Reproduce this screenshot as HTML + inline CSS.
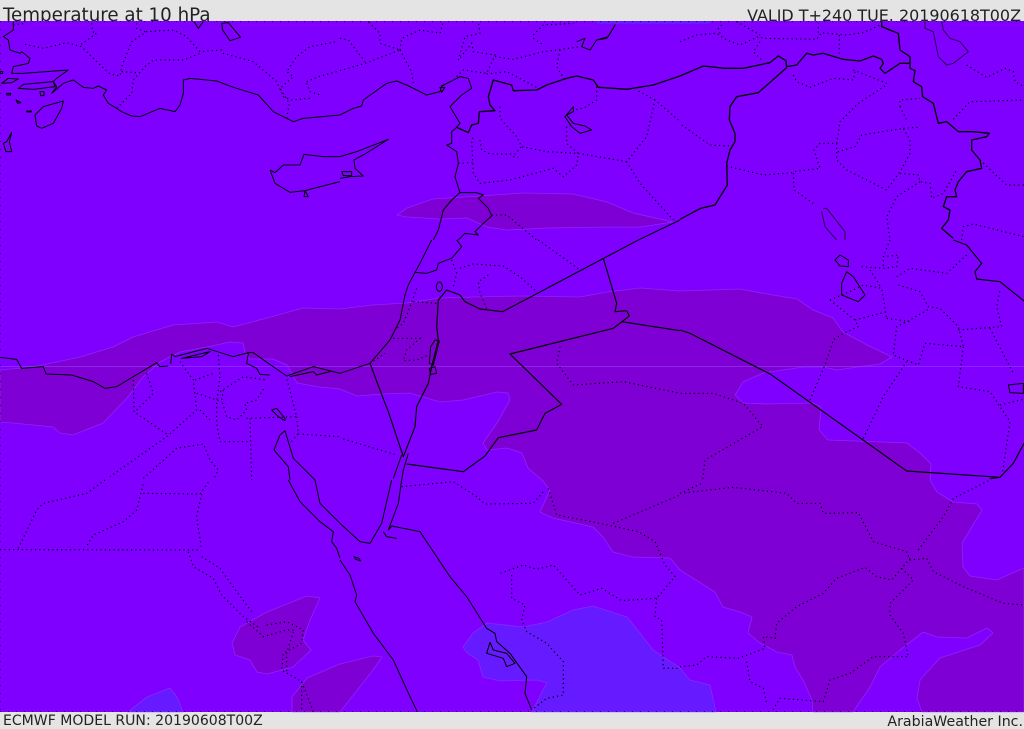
<!DOCTYPE html>
<html><head><meta charset="utf-8"><title>Temperature at 10 hPa</title>
<style>
html,body{margin:0;padding:0;background:#e4e4e4;overflow:hidden}
svg{display:block}
text{font-family:"DejaVu Sans","Liberation Sans",sans-serif;fill:#222}
.c{fill:none;stroke:#000;stroke-width:3;stroke-linejoin:round}
.d{fill:none;stroke:#000;stroke-width:3.6;stroke-dasharray:3.6 9.5;opacity:1}
.f{stroke:#9a40ff;stroke-width:.8;stroke-opacity:.55}
</style></head><body>
<svg width="1024" height="729" viewBox="0 0 1024 729" xmlns="http://www.w3.org/2000/svg">
<rect width="1024" height="729" fill="#e4e4e4"/>
<text x="3" y="21" font-size="18.25">Temperature at 10 hPa</text>
<text x="1021" y="21" font-size="15.95" text-anchor="end">VALID T+240 TUE. 20190618T00Z</text>
<text x="3" y="725" font-size="14.05">ECMWF MODEL RUN: 20190608T00Z</text>
<text x="1023" y="726" font-size="14.2" text-anchor="end">ArabiaWeather Inc.</text>
<rect x="0" y="21" width="1024" height="691" fill="#7f00ff"/>
<rect x="597" y="21" width="113" height="3" fill="#661aff"/>
<g class="f">
<path fill="#7f00d4" d="M0,370 L33,367 80,357 113,347 133,337 173,325 217,322 233,327 267,318 303,308 340,309 373,305 407,303 440,298 473,297 523,296 580,297 607,292 640,288 680,291 740,289 773,295 797,299 813,310 833,318 843,332 867,345 892,357 880,364 857,367 837,370 823,367 803,367 763,373 743,382 735,395 743,403 767,404 813,403 821,407 819,430 828,440 907,443 920,453 931,464 930,480 937,492 953,502 977,504 982,510 973,525 962,543 963,567 970,576 997,580 1024,568 1024,712 922,712 917,698 920,680 940,658 980,645 993,633 987,628 967,638 937,637 923,632 900,650 880,667 870,687 853,712 813,712 812,700 803,680 795,667 792,655 777,652 760,643 748,633 752,617 743,613 723,607 715,592 680,570 670,558 633,557 613,552 603,537 593,527 553,518 540,512 550,490 542,480 528,468 522,453 507,448 487,450 483,443 497,423 510,400 508,393 497,392 463,400 440,402 410,393 383,394 357,396 340,389 320,387 297,383 287,365 273,359 250,359 245,352 243,343 230,342 207,347 180,352 160,362 143,377 127,398 103,423 73,435 60,433 53,427 13,423 0,422Z"/>
<path fill="#7f00d4" d="M397,215 L407,208 433,199 480,196 523,193 573,194 607,202 633,213 673,222 640,227 607,227 547,228 507,230 487,227 467,218 440,219 407,217Z"/>
<path fill="#7f00d4" d="M232,643 L240,627 267,612 307,596 320,598 310,620 303,640 311,650 293,667 267,674 257,672 250,660 235,655Z"/>
<path fill="#7f00d4" d="M292,712 L292,697 307,678 340,664 373,656 382,657 373,670 340,712Z"/>
<path fill="#661aff" d="M463,647 L473,633 487,623 523,627 547,622 573,610 593,606 627,617 640,633 653,650 680,668 690,680 710,685 716,712 532,712 543,690 547,683 537,680 500,681 483,677 478,660 467,653Z"/>
<path fill="#661aff" d="M128,712 L147,697 170,688 177,697 183,712Z"/>
</g>
<path d="M0,366.5H1024" stroke="#a050ff" stroke-opacity=".45" stroke-width="1"/>
<path d="M.5,21V712M0,21.5H1024M0,711.5H1024" stroke="#000" stroke-width="1" stroke-dasharray="1 7" opacity=".6"/>

<g transform="scale(.33333)">
<path class="c" d="M40,65 L40,90 10,110 25,120 30,150 60,160 65,155 90,175 85,190 40,200 35,220 70,220 205,210 170,235 160,245 170,260 155,280 190,250 220,240 250,262 280,265 295,258 320,270 310,285 325,310 350,325 365,335 395,348 420,350 480,325 525,335 540,315 550,280 550,240 570,235 650,243 700,262 775,285 820,335 880,365 910,355 1020,345"/>
<path class="c" d="M55,265L70,253 160,245 165,260 100,268Z M5,250L25,235 55,237 35,248Z M105,345L130,320 190,303 185,325 160,370 125,385 110,378Z M35,397L20,425 10,430 18,455 35,455 28,425Z M665,70L685,68 722,112 690,122 668,90Z M582,65L595,85 610,65"/>
<path class="c" d="M810,510L825,518 850,495 900,495 912,463 970,470 1020,470 M810,510L825,550 870,577 915,572 925,590 912,590 915,572 1020,545"/>
<path class="c" d="M20,280h12v5h-12z M48,300l15,8-10,2z M80,333h14v3h-14z M120,275h12v12h-10z M0,215h8v6h-8z"/>
<path class="d" d="M40,75L75,70 M75,133L130,145 200,128 245,140 285,180 330,222 360,228 365,200 395,125 440,95 520,90 560,110 600,155 665,150 670,160 760,185 830,245 850,290 875,300 930,295 M275,70L278,95 290,100 240,135 M410,70L410,85 440,97 M365,215L410,218 M350,325L395,280 400,240 435,200 460,180 550,180 600,160 M860,355L868,310 840,265 880,230 860,215 890,170 930,140 1010,125 M920,245L955,230 1010,215 M920,250L930,275 960,285"/>
</g>

<g transform="translate(340,0) scale(.33333)">
<path class="c" d="M0,470L50,455 145,418 75,462 42,480 45,505 70,528 30,530 0,535 M5,515h30v12h-25z"/>
<path class="c" d="M0,345L40,325 65,318 70,300 140,250 170,243 200,255 260,285 300,275 305,258 360,230 385,235 395,265 365,285 330,320 360,370 350,382 335,395 335,430 320,435 350,455 355,490 345,530 360,578 335,600 310,630 295,690 280,720"/>
<path class="c" style="stroke-width:4" d="M350,382L385,398 395,375 415,370 418,335 465,332 450,315 445,290 460,240 515,255 520,272 590,270 620,255 680,235 710,228 760,240 775,262 820,265 860,268 940,255 1020,228"/>
<path class="c" d="M360,578L410,578 430,585 415,595 445,625 455,648 430,670 405,695 415,705 375,700 355,720 M1020,660L895,720"/>
<path class="c" d="M300,262l15,0-10,15-5-15z M700,320L675,350 695,380 720,400 755,390 735,378 700,370 680,345 700,335Z M710,125L735,115 725,140 750,150 770,120 800,115 820,85 825,75 805,110 770,120"/>
<path class="d" d="M0,115L25,120 75,185 M0,212L75,190 180,150 120,130 120,100 85,65 M180,150L185,115 240,90 300,100 310,65 M180,150L215,215 220,250 M350,230L370,210 440,220 465,165 400,155 395,130 355,180 375,110 420,100 415,65 M465,170L520,178 610,155 650,150 720,140 M660,150L650,200 675,240 M580,105L610,75 700,70 M580,115L610,135 M440,222L500,215 590,262 M480,320L480,355 530,410 545,440 620,455 715,460 860,485 920,410 945,300 1015,360 M945,300L890,270 M770,260L770,300 730,325 700,330 M680,380L680,430 715,460 710,495 670,530 640,505 510,540 420,550 400,520 395,420 405,405 M420,420L425,450 450,462 525,462 545,440 M520,470L535,472 M860,485L900,550 1000,660 M455,645L500,645 590,720 M355,490L400,488"/>
</g>

<g transform="translate(680,0) scale(.33333)">
<path class="c" style="stroke-width:4" d="M0,228L70,198 135,205 190,205 270,188 295,168 318,182 320,200 350,195 380,160 400,165 430,160 490,178 540,183 580,168 605,178 610,190 600,205 615,220 660,190 690,190"/>
<path class="c" style="stroke-width:4" d="M320,203L235,278 170,290 150,320 148,360 165,400 165,425 150,450 140,490 142,555 105,615 62,625 0,658"/>
<path class="c" style="stroke-width:4" d="M605,65L605,80 655,100 660,150 690,170 690,205 705,212 700,245 725,260 728,290 760,310 775,370 800,365 835,395 880,395 928,400 920,410 875,420 875,450 900,480 905,505 860,515 835,545 825,570 830,590 800,590 790,620 810,630 805,660 785,685 820,715"/>
<path class="c" style="opacity:.7" d="M735,65L735,85 760,95 775,170 800,195 820,190 865,155 840,125 810,115 790,90 785,65 M430,625L440,625 495,695 495,720 M425,635L435,680 470,720"/>
<path class="d" d="M0,125L50,105 110,100 140,120 180,135 235,110 250,115 410,118 425,98 500,105 550,98 600,75 M120,100L115,85 130,70 M170,65L240,105 M415,98L415,70 M478,105L478,170 M240,125L220,155 245,180 M340,225L350,245 390,262 460,235 520,240 525,215 M520,210L620,250 M615,258L535,310 480,365 470,430 420,430 402,450 420,505 340,515 342,570 400,610 M140,498L250,525 340,518 M5,375L90,435 150,438 M470,430L470,480 500,510 620,570 660,515 690,460 690,420 670,385 545,405 525,440 465,458 M670,385L715,382 M660,520L715,525 720,545 750,550 755,595 790,580 830,510 M720,545L650,590 620,650 630,720 M820,358L870,305 1032,300 M660,320L660,300 720,295 M660,320L680,360 M900,480L980,555 1032,555 M860,195L920,232 975,205 1000,215 1005,245 1032,260 M845,720L850,680 880,672 1032,710"/>
</g>

<g transform="translate(0,240) scale(.33333)">
<path class="c" d="M0,352L50,358 65,385 130,380 138,402 215,405 280,425 315,445 350,440 470,368 480,380 505,378 M515,342L525,350 620,325 700,350 745,338 760,338 805,370 860,408 940,380 1020,400 M515,342L512,372 M745,340L740,370 770,385 780,403 810,405 M545,355L630,335 605,350Z M870,410L940,395 950,405 990,395 M855,572L840,585 822,630 865,680 870,720 M855,572L880,655 945,720 M815,510L830,505 855,535 855,542 835,530Z"/>
<path class="d" d="M400,420L402,515 500,582 M440,400L460,460 440,480 405,515 M540,365L580,420 590,510 500,590 330,710 M590,460L665,485 M655,345L660,410 650,485 650,550 660,605 750,605 M585,420L640,400 M660,455L730,410 800,420 M670,450L665,480 680,530 710,540 740,510 735,490 770,480 795,440 M740,535L890,530 860,415 M890,530L895,580 870,610 M895,582L1020,590 M750,535L755,720 M430,715L530,625 610,612 630,660 655,690 640,720 M600,510L630,540"/>
</g>

<g transform="translate(340,240) scale(.33333)">
<path class="c" d="M275,0L240,70 225,97 205,135 195,165 180,240 150,300 90,370 0,400 M225,97L260,100 290,90 295,70 335,55 365,20 350,0"/>
<path class="c" style="stroke-width:3.5" d="M90,370L135,490 145,515 190,650 225,560 230,500 265,430 275,380 295,300 290,260 295,180 320,150 360,165 375,185 420,207 488,215 895,0 M790,55L830,190 825,215 860,212 868,228 820,265 510,342 665,493 615,520 590,570 475,593 435,648 370,695 200,672 M845,245L1020,272"/>
<path class="c" d="M205,640L190,690 185,720 M185,645L160,715 M272,320L285,300 298,303 280,375 268,370Z M268,385L285,380 290,400 272,403Z"/>
<ellipse cx="298" cy="140" rx="9" ry="14" class="c"/>
<path class="d" d="M335,60L350,100 340,140 M360,85L400,72 490,78 540,110 590,155 M445,105L415,125 420,160 440,205 M230,145L210,200 190,250 170,265 M160,295L240,295 200,330 190,362 230,360 265,345 M90,370L135,340 M10,597L170,645 M595,0L720,90 M660,320L650,370 700,435 850,425 1020,460 M220,185L290,190"/>
</g>

<g transform="translate(680,240) scale(.33333)">
<path class="c" style="stroke-width:3.5" d="M0,270L30,280 272,403 680,693 960,712 1000,670 1032,610 M960,712L930,716 M1032,183L960,125 890,117 885,95 905,70 860,15 820,0"/>
<path class="c" d="M500,95L485,130 485,165 535,185 555,165 520,110Z M465,60L480,45 505,60 505,80 480,78Z M985,435L1030,430 1030,460 990,458Z"/>
<path class="d" d="M2,460L100,460 190,490 248,560 75,660 68,720 M390,480L435,375 460,300 490,280 535,260 525,240 620,215 M550,595L610,470 680,365 M450,180L525,240 M450,180L520,150 550,135 605,145 620,235 M545,80L610,85 650,80 655,45 610,50 610,85 M570,90L605,145 M630,0L610,50 M650,110L690,85 800,100 860,45 M655,135L720,155 745,200 780,205 835,260 850,320 735,310 715,375 640,345 650,260 690,240 750,205 M620,235L690,245 M835,270L965,260 950,200 960,150 M930,265L1000,400 M850,320L835,440 930,455 990,545 965,715 M960,495L1030,478"/>
</g>

<g transform="translate(0,480) scale(.33333)">
<path class="c" d="M865,0L900,65 960,125 1000,155 995,185 1010,205 1020,235 M945,0L960,70 1020,130"/>
<path class="d" d="M0,209L600,210 M55,205L110,90 130,70 260,40 315,0 M262,195L280,165 370,125 410,90 430,10 M430,40L600,42 630,0 M605,42L590,110 605,210 M565,215L580,260 640,295 665,345 730,410 780,445 M605,230L660,265 710,335 755,395 M740,425L790,470 860,450 885,450 M800,435L860,425 910,450 905,490 850,520 845,570 905,605 940,695 M880,455L860,520 860,575 M905,605L905,695"/>
</g>

<g transform="translate(340,480) scale(.33333)">
<path class="c" d="M0,130L60,185 90,190 125,130 155,0 M185,0L175,70 145,150 155,138 240,155 330,290 380,350 440,445 465,460 470,485 510,520 560,590 555,640 575,690 M130,155l10,15 30,5 M0,240L30,285 50,345 45,365 100,460 160,540 210,650 232,695 M42,230l15,5 5,8-15-5z M450,487L440,520 490,535 500,560 525,550 500,520 460,510Z"/>
<path class="d" d="M185,20L340,5 410,50 435,72 580,70 610,35 M625,25L650,105 780,130 895,155 945,185 975,255 1005,290 950,355 845,362 785,325 720,345 640,255 590,268 550,255 480,280 M515,285L515,355 555,375 545,420 560,455 620,490 670,545 670,645 620,655 575,690 M950,355L945,410 965,420 970,565 1020,565 M820,130L1020,45"/>
</g>

<g transform="translate(680,480) scale(.33333)">
<path class="d" d="M0,40L65,10 M0,40L160,22 320,40 350,70 420,70 430,100 535,98 580,185 680,215 690,240 740,235 760,275 850,320 970,370 1032,375 M715,210L790,110 820,55 930,0 M665,265L700,300 630,370 630,405 670,460 685,530 580,530 510,580 450,600 430,665 300,655 275,695 M690,235L665,265 635,300 590,290 555,262 470,295 430,340 350,380 290,430 285,475 250,470 255,505 175,535 80,530 50,555 0,560 M200,545L210,605 250,625 260,670"/>
</g>
</svg>
</body></html>
